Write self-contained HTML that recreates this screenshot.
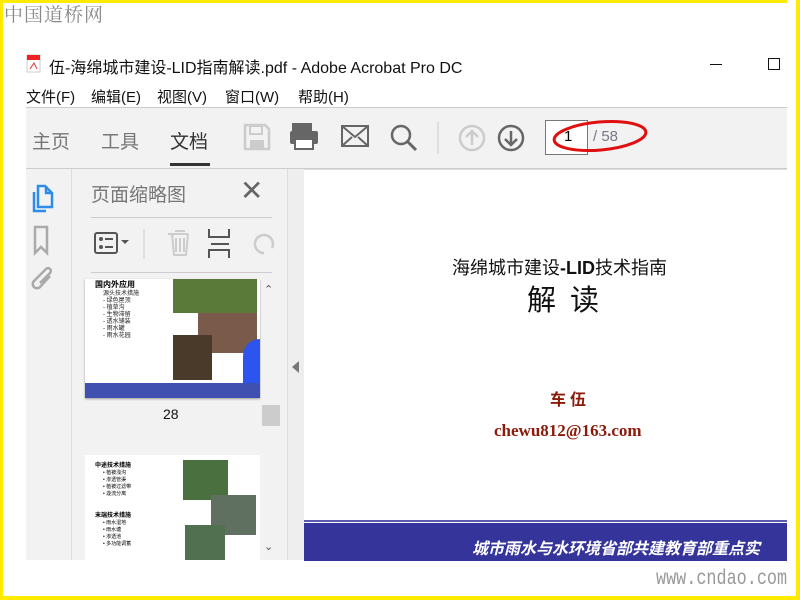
<!DOCTYPE html>
<html><head><meta charset="utf-8"><style>
*{margin:0;padding:0;box-sizing:border-box}
body{width:800px;height:600px;position:relative;background:#fff;font-family:"Liberation Sans","Noto Sans CJK SC",sans-serif;overflow:hidden}
.a{position:absolute}
</style></head><body>
<div class="a" style="left:0;top:0;width:800px;height:600px;border:3px solid #ffea00;border-bottom-width:4px"></div>
<div class="a" style="left:4px;top:0;font-size:19px;color:#888;letter-spacing:1px;font-family:'Noto Serif CJK SC',serif">中国道桥网</div>
<!-- title -->
<svg class="a" style="left:26px;top:54px" width="16" height="20"><rect x="1" y="1" width="13" height="17" fill="#fff" stroke="#ccc"/><rect x="1" y="1" width="13" height="5" fill="#e22"/><path d="M4 15 L8 9 L11 15" stroke="#d33" fill="none"/></svg>
<div class="a" style="left:49px;top:54px;font-size:16px;color:#111">伍-海绵城市建设-LID指南解读.pdf - Adobe Acrobat Pro DC</div>
<div class="a" style="left:710px;top:64px;width:12px;height:1px;background:#111"></div>
<div class="a" style="left:768px;top:58px;width:12px;height:12px;border:1px solid #111"></div>
<div class="a" style="left:26px;top:86px;font-size:15px;color:#111">文件(F)</div>
<div class="a" style="left:91px;top:86px;font-size:15px;color:#111">编辑(E)</div>
<div class="a" style="left:157px;top:86px;font-size:15px;color:#111">视图(V)</div>
<div class="a" style="left:225px;top:86px;font-size:15px;color:#111">窗口(W)</div>
<div class="a" style="left:298px;top:86px;font-size:15px;color:#111">帮助(H)</div>
<!-- toolbar -->
<div class="a" style="left:26px;top:107px;width:761px;height:62px;background:#f2f2f2;border-top:1px solid #ccc;border-bottom:1px solid #ccc"></div>
<div class="a" style="left:32px;top:127px;font-size:19px;color:#777">主页</div>
<div class="a" style="left:101px;top:127px;font-size:19px;color:#777">工具</div>
<div class="a" style="left:170px;top:127px;font-size:19px;color:#333">文档</div>
<div class="a" style="left:170px;top:163px;width:40px;height:3px;background:#333"></div>
<svg class="a" style="left:240px;top:120px" width="200" height="36">
<path d="M5 5h20l4 4v20H5z" fill="none" stroke="#ccc" stroke-width="2.5"/><rect x="10" y="6" width="12" height="8" fill="none" stroke="#ccc" stroke-width="2"/><rect x="10" y="20" width="14" height="8" fill="#ccc"/>
<rect x="52" y="3" width="20" height="8" fill="#666"/><rect x="50" y="11" width="28" height="13" rx="2" fill="#666"/><rect x="55" y="19" width="18" height="10" fill="#fff" stroke="#666" stroke-width="2"/>
<rect x="102" y="6" width="26" height="20" fill="none" stroke="#666" stroke-width="2"/><path d="M102 6l13 11 13-11M102 26l10-9M128 26l-10-9" stroke="#666" stroke-width="2" fill="none"/>
<circle cx="161" cy="15" r="9" fill="none" stroke="#666" stroke-width="2.5"/><path d="M168 22l8 8" stroke="#666" stroke-width="3"/>
<path d="M198 2v32" stroke="#ccc"/></svg>
<svg class="a" style="left:458px;top:122px" width="70" height="32">
<circle cx="14" cy="16" r="12" fill="none" stroke="#ccc" stroke-width="2.5"/><path d="M14 23V9M8 15l6-6 6 6" stroke="#ccc" stroke-width="2.5" fill="none"/>
<circle cx="53" cy="16" r="12" fill="none" stroke="#666" stroke-width="2.5"/><path d="M53 9v14M47 17l6 6 6-6" stroke="#666" stroke-width="2.5" fill="none"/></svg>
<div class="a" style="left:545px;top:120px;width:43px;height:35px;border:1px solid #777;background:#fff;font-size:15px;padding:7px 0 0 18px">1</div>
<div class="a" style="left:593px;top:128px;font-size:15px;color:#778">/ 58</div>
<svg class="a" style="left:550px;top:112px" width="105" height="46"><ellipse cx="50" cy="24" rx="46" ry="14" fill="none" stroke="#e01010" stroke-width="3" transform="rotate(-5 50 24)"/></svg>
<!-- left bar -->
<div class="a" style="left:26px;top:169px;width:45px;height:391px;background:#f2f2f2"></div>
<svg class="a" style="left:28px;top:178px" width="40" height="120">
<path d="M10 8h7l7 7v14H10z M18 8v7h6" fill="none" stroke="#2d8ceb" stroke-width="2.5"/><path d="M6 14v19h12" fill="none" stroke="#2d8ceb" stroke-width="2.5"/>
<path d="M7 49h12v26l-6-6-6 6z" fill="none" stroke="#aaa" stroke-width="2.5"/>
<path d="M22 98l-10 11a4 4 0 0 1-6-6l12-12a2.5 2.5 0 0 1 4 4l-10 10" fill="none" stroke="#aaa" stroke-width="2.5"/></svg>
<!-- panel -->
<div class="a" style="left:71px;top:169px;width:217px;height:391px;background:#f2f2f2;border-left:1px solid #ddd;border-right:1px solid #ddd"></div>
<div class="a" style="left:91px;top:180px;font-size:19px;color:#777">页面缩略图</div>
<div class="a" style="left:240px;top:174px;font-size:28px;color:#666;font-weight:200">✕</div>
<div class="a" style="left:91px;top:217px;width:181px;height:1px;background:#ccc"></div>
<div class="a" style="left:91px;top:272px;width:181px;height:1px;background:#ccc"></div>
<svg class="a" style="left:92px;top:225px" width="185" height="40">
<rect x="3" y="8" width="22" height="20" rx="2" fill="none" stroke="#555" stroke-width="2"/><circle cx="9" cy="14" r="2" fill="#555"/><circle cx="9" cy="22" r="2" fill="#555"/><path d="M13 14h8M13 22h8" stroke="#555" stroke-width="2"/><path d="M29 15l4 4 4-4z" fill="#555"/>
<path d="M52 4v30" stroke="#ccc"/>
<path d="M76 9h20M80 9l2 21h12l2-21M83 6h10M84 13v14M88 13v14M92 13v14" fill="none" stroke="#ccc" stroke-width="2"/>
<path d="M117 4v8h20V4M117 33v-8h20v8M119 19h18" fill="none" stroke="#555" stroke-width="2"/>
<path d="M172 28a9 9 0 1 1 8-5" fill="none" stroke="#ccc" stroke-width="2.5"/></svg>
<!-- thumbnails -->
<div class="a" style="left:85px;top:279px;width:175px;height:119px;background:#fff;overflow:hidden;box-shadow:0 1px 2px #999">
<div class="a" style="left:10px;top:0;font-size:8px;font-weight:bold">国内外应用</div>
<div class="a" style="left:18px;top:12px;font-size:6px;line-height:7px;color:#222">源头技术措施<br>- 绿色屋顶<br>- 植草沟<br>- 生物滞留<br>- 透水铺装<br>- 雨水罐<br>- 雨水花园</div>
<div class="a" style="left:88px;top:0;width:84px;height:34px;background:#5a7a3a"></div>
<div class="a" style="left:113px;top:34px;width:59px;height:40px;background:#7a5a4a"></div>
<div class="a" style="left:88px;top:56px;width:39px;height:45px;background:#4a3a2a"></div>
<div class="a" style="left:158px;top:60px;width:17px;height:45px;background:#2c55f0;border-radius:20px 0 0 0"></div>
<div class="a" style="left:0;top:104px;width:175px;height:15px;background:#4050b0"></div>
</div>
<div class="a" style="left:163px;top:406px;font-size:14px;color:#111">28</div>
<div class="a" style="left:85px;top:455px;width:175px;height:105px;background:#fff;overflow:hidden">
<div class="a" style="left:10px;top:5px;font-size:6px;font-weight:bold">中途技术措施</div>
<div class="a" style="left:18px;top:15px;font-size:5px;line-height:7px">• 植被浅沟<br>• 渗透管渠<br>• 植被过滤带<br>• 漩流分离</div>
<div class="a" style="left:98px;top:5px;width:45px;height:40px;background:#4a7040"></div>
<div class="a" style="left:126px;top:40px;width:45px;height:40px;background:#607060"></div>
<div class="a" style="left:100px;top:70px;width:40px;height:35px;background:#507050"></div>
<div class="a" style="left:10px;top:55px;font-size:6px;font-weight:bold">末端技术措施</div>
<div class="a" style="left:18px;top:65px;font-size:5px;line-height:7px">• 雨水湿地<br>• 雨水塘<br>• 渗透池<br>• 多功能调蓄</div>
</div>
<div class="a" style="left:261px;top:279px;width:20px;height:281px;background:#f2f2f2"></div>
<div class="a" style="left:262px;top:405px;width:18px;height:21px;background:#ccc"></div>
<div class="a" style="left:264px;top:283px;font-size:11px;color:#555">⌃</div>
<div class="a" style="left:264px;top:540px;font-size:11px;color:#555">⌄</div>
<!-- separator -->
<div class="a" style="left:288px;top:169px;width:16px;height:391px;background:#eee"></div>
<div class="a" style="left:292px;top:361px;width:0;height:0;border-top:6px solid transparent;border-bottom:6px solid transparent;border-right:7px solid #777"></div>
<!-- doc page -->
<div class="a" style="left:304px;top:169px;width:483px;height:391px;background:#fff;border-top:1px solid #ddd"></div>
<div class="a" style="left:452px;top:254px;font-size:18px;color:#111">海绵城市建设<b>-LID</b>技术指南</div>
<div class="a" style="left:527px;top:277px;font-size:29px;color:#111;letter-spacing:14px">解读</div>
<div class="a" style="left:550px;top:386px;font-size:16px;color:#8b1a0a;font-weight:bold;letter-spacing:4px">车伍</div>
<div class="a" style="left:494px;top:421px;font-size:17px;color:#8b1a0a;font-weight:bold;font-family:'Liberation Serif',serif">chewu812@163.com</div>
<div class="a" style="left:304px;top:520px;width:483px;height:2px;background:#5a5ab0"></div>
<div class="a" style="left:304px;top:523px;width:483px;height:38px;background:#35349a;overflow:hidden">
<div class="a" style="left:168px;top:12px;font-size:16px;color:#fff;font-weight:bold;font-style:italic;white-space:nowrap">城市雨水与水环境省部共建教育部重点实</div></div>
<div class="a" style="left:656px;top:568px;font-size:21px;color:#999;font-family:'Liberation Mono',monospace;transform:scaleX(.8);transform-origin:left">www.cndao.com</div>
<div class="a" style="left:787px;top:0;width:10px;height:596px;background:#fff"></div>
<div class="a" style="left:796px;top:0;width:4px;height:600px;background:#ffea00"></div>
</body></html>
